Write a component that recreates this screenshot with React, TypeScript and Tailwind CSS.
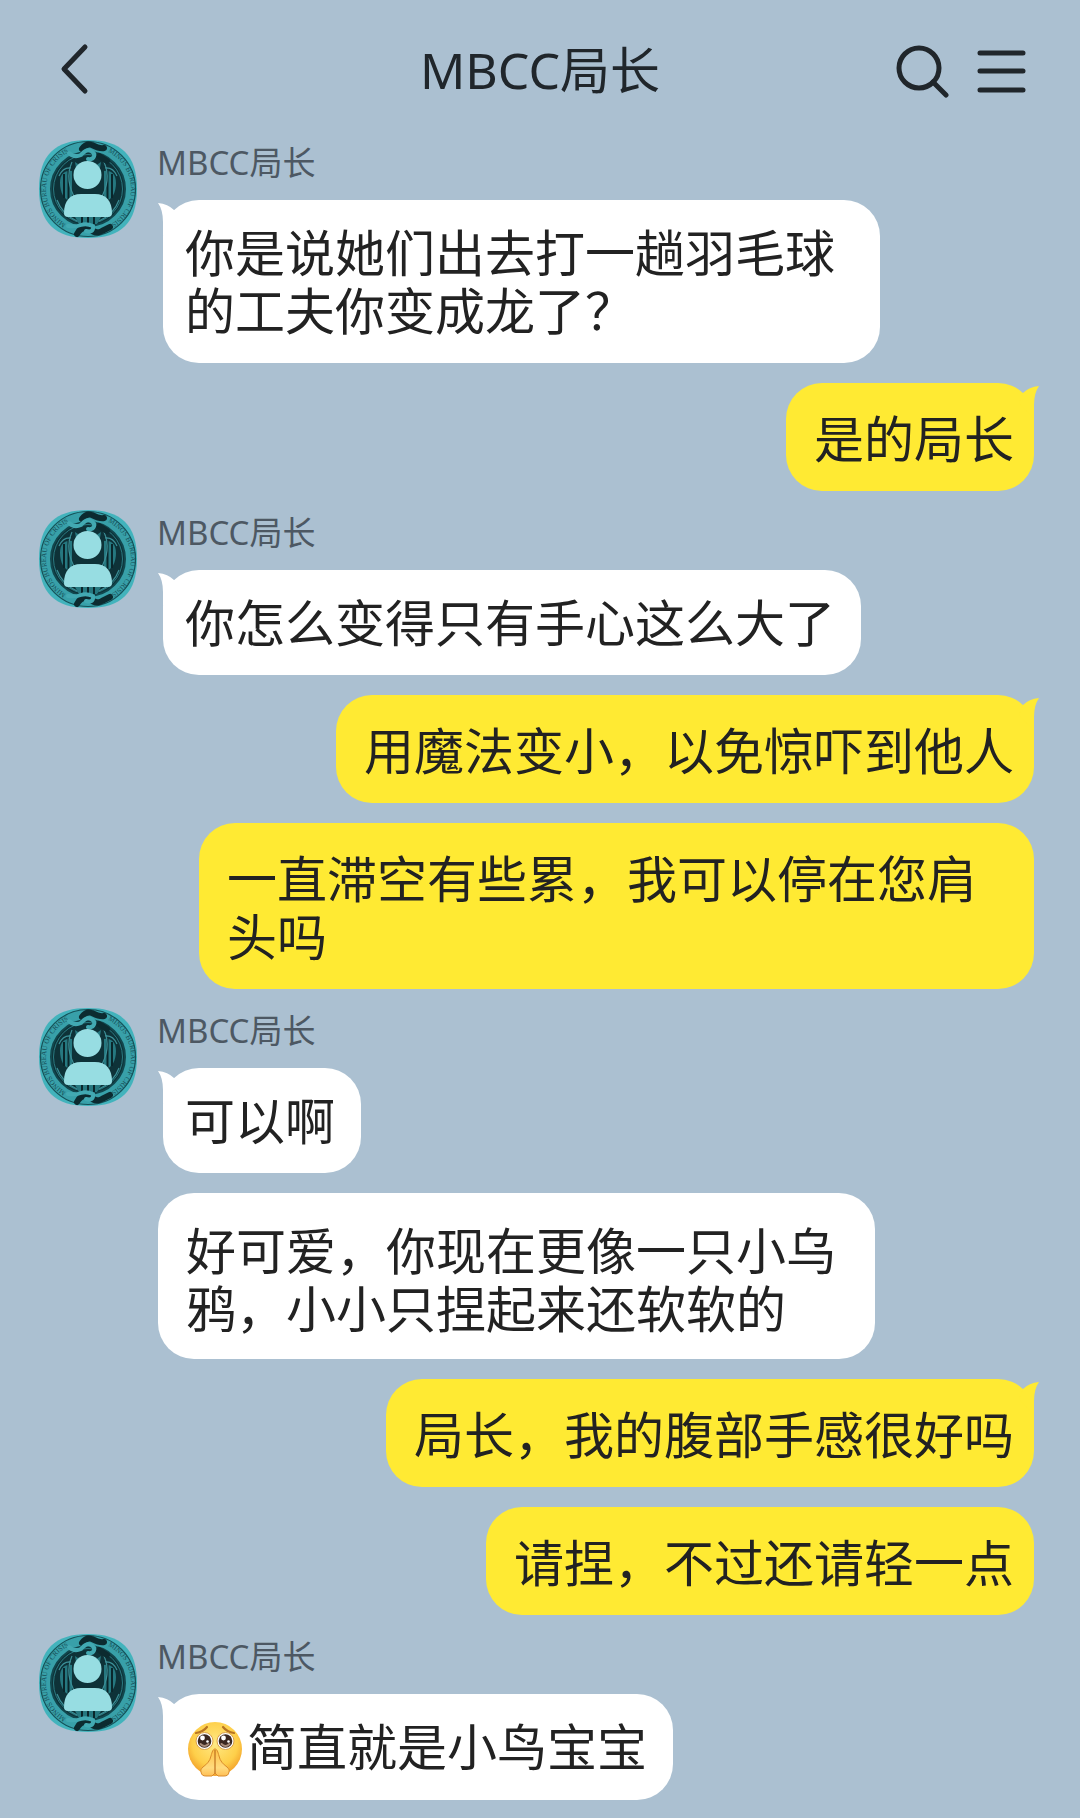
import { useId } from 'react'
import type { ReactNode } from 'react'

interface Message {
  id: number
  from: 'them' | 'me'
  /** First message of a run: gets the tail, and for 'them' the avatar and name. */
  first: boolean
  body: ReactNode
}

const CONTACT = 'MBCC局长'

const MESSAGES: Message[] = [
  { id: 1,  from: 'them', first: true,  body: '你是说她们出去打一趟羽毛球的工夫你变成龙了？' },
  { id: 2,  from: 'me',   first: true,  body: '是的局长' },
  { id: 3,  from: 'them', first: true,  body: '你怎么变得只有手心这么大了' },
  { id: 4,  from: 'me',   first: true,  body: '用魔法变小，以免惊吓到他人' },
  { id: 5,  from: 'me',   first: false, body: '一直滞空有些累，我可以停在您肩头吗' },
  { id: 6,  from: 'them', first: true,  body: '可以啊' },
  { id: 7,  from: 'them', first: false, body: '好可爱，你现在更像一只小乌鸦，小小只捏起来还软软的' },
  { id: 8,  from: 'me',   first: true,  body: '局长，我的腹部手感很好吗' },
  { id: 9,  from: 'me',   first: false, body: '请捏，不过还请轻一点' },
  { id: 10, from: 'them', first: true,  body: <><PleadingEmoji />简直就是小鸟宝宝</> },
]

function PleadingEmoji() {
  const id = useId()
  return (
    <svg viewBox="0 0 56 56" className="ml-0.5 mr-1 inline-block size-14 align-[-11px]" role="img" aria-label="拜托">
      <defs>
        <radialGradient id={`${id}f`} cx="50%" cy="40%" r="60%">
          <stop offset="0" stopColor="#ffe983" />
          <stop offset="0.7" stopColor="#fecf4a" />
          <stop offset="1" stopColor="#f2a02a" />
        </radialGradient>
        <linearGradient id={`${id}h`} x1="0" y1="0" x2="0" y2="1">
          <stop offset="0" stopColor="#ffc144" />
          <stop offset="0.7" stopColor="#ffdb7e" />
          <stop offset="1" stopColor="#ffbe55" />
        </linearGradient>
      </defs>
      <circle cx="28" cy="28" r="27" fill={`url(#${id}f)`} />
      <path d="M9 12q7-1 11-6M36 6q4 5 11 6" fill="none" stroke="#b87422" strokeWidth="2.200" strokeLinecap="round" />
      {[17.5, 38.5].map(cx => (
        <g key={cx}>
          <circle cx={cx} cy="20" r="8.500" fill="#fff" stroke="#d9a04a" />
          <circle cx={cx} cy="20" r="6.800" fill="#3a2720" />
          <path d={`M${cx - 4} 23q4 4 8 0`} fill="none" stroke="#a98c7a" strokeWidth="2" strokeLinecap="round" />
          <circle cx={cx - 2} cy="17" r="2.400" fill="#fff" />
          <circle cx={cx + 3} cy="20.500" r="1.300" fill="#fff" />
        </g>
      ))}
      <path
        d="M28 28c-2 0-3 3-4 7-1 5-4 8-8 11-2 2-2.500 3-2 5 .5 3 2 4 5 4h6l3-3 3 3h6c3 0 4.500-1 5-4 .5-2 0-3-2-5-4-3-7-6-8-11-1-4-2-7-4-7z"
        fill={`url(#${id}h)`}
        stroke="#d98a2a"
      />
      <path d="M28 29v23" stroke="#bd701f" strokeWidth="1.200" />
    </svg>
  )
}

function Avatar() {
  const id = useId()
  return (
    <svg viewBox="0 0 98 98" className="size-[98px] shrink-0" role="img" aria-label={CONTACT}>
      <defs>
        <clipPath id={`${id}c`}>
          <path d="M49 0C82 0 98 15 98 49S82 98 49 98 0 83 0 49 16 0 49 0z" />
        </clipPath>
        <path id={`${id}l`} d="M27 84A41 41 0 0 1 30 12" />
        <path id={`${id}r`} d="M69 12A41 41 0 0 1 72 84" />
      </defs>
      <g clipPath={`url(#${id}c)`}>
        <rect width="98" height="98" fill="#42b3bc" />
        <circle cx="49" cy="49" r="47.500" fill="#38a0a9" stroke="#155158" strokeWidth="1.200" />
        <circle cx="49" cy="49" r="37" fill="#0e3238" stroke="#12474e" strokeWidth="2" />
        <circle cx="49" cy="49" r="34.500" fill="none" stroke="#2b7b83" />
        <g fill="#17505a" fontSize="7" fontFamily="Liberation Serif, serif">
          <text><textPath href={`#${id}l`}>MINOS BUREAU OF CRISIS</textPath></text>
          <text><textPath href={`#${id}r`}>MINOS BUREAU OF CRISIS</textPath></text>
        </g>
        <g fill="#267880">
          <path d="M21 43c0-9 5-13 12-12v30c-8 0-12-9-12-18zM77 43c0-9-5-13-12-12v30c8 0 12-9 12-18z" />
          <path d="M36 22l6 4 2-4 5 4 5-4 2 4 6-4-3 18H39zM36 77h26l-4 7H40z" />
        </g>
        <g fill="none" stroke="#0a262b" strokeWidth="2">
          <path d="M25 34v24M29.500 31v30M68.500 31v30M73 34v24M43 77v8M49 77v9M55 77v8" />
        </g>
        <g fill="none" stroke="#3b8e96" strokeWidth="1.200">
          <path d="M18 60q5 14 20 21M80 60q-5 14-20 21M33 22q-8 18 4 38M65 22q8 18-4 38M20 36q4-9 12-8M78 36q-4-9-12-8" />
        </g>
        <g fill="none" stroke="#0c2b30" strokeWidth="6" strokeLinecap="round">
          <path d="M43 9q4-6 10-4 8 4 12 3M60 16l8 5" />
          <path d="M38 94q4-8 12-6 6 7 13 3l8-4" />
        </g>
        <g fill="none" stroke="#42a9b2" strokeWidth="4" strokeLinecap="round">
          <path d="M30 13q5 5 12 2c3-3 5-6 10-4 6 3 3 9-3 8" />
          <path d="M29 86q8 1 13-1t12 1q1 7-7 5" />
        </g>
        <circle cx="48.500" cy="35" r="14" fill="#97dde2" />
        <path d="M25 73c0-12 6-19 17-19h14c11 0 17 7 17 19q0 4-4 4H29q-4 0-4-4z" fill="#97dde2" />
      </g>
    </svg>
  )
}

/** Small horn on the outer top corner of a bubble. */
function Tail({ side }: { side: 'left' | 'right' }) {
  return (
    <svg
      viewBox="0 0 24 36"
      className={`absolute top-0 h-9 w-6 fill-current ${side === 'left' ? '-left-[5px] -scale-x-100' : '-right-[5px]'}`}
      aria-hidden="true"
    >
      <path d="M8 10Q14 4 24 3Q19 10 19 22V36L4 20Z" />
    </svg>
  )
}

function Bubble({ from, first, children }: { from: Message['from']; first: boolean; children: ReactNode }) {
  const mine = from === 'me'
  const color = mine ? 'text-[#ffea33]' : 'text-white'
  const fill = mine ? 'bg-[#ffea33]' : 'bg-white'
  const space = mine
    ? 'max-w-[835px] pt-[27px] pb-[23px] pl-7 pr-5'
    : first
      ? 'ml-[6px] max-w-[717px] pt-6 pb-[23px] pl-[22px] pr-[26px]'
      : 'max-w-[717px] pt-[29px] pb-[21px] pl-7 pr-5'

  return (
    <div className={`relative w-fit rounded-[36px] ${fill} ${color} ${space}`}>
      {first && <Tail side={mine ? 'right' : 'left'} />}
      <p className="relative text-[50px] leading-[58px] text-[#222]">{children}</p>
    </div>
  )
}

function MessageRow({ message }: { message: Message }) {
  const { from, first, body } = message

  if (from === 'me') {
    return (
      <li className="mt-5 flex justify-end pr-[46px] first:mt-0">
        <Bubble from={from} first={first}>{body}</Bubble>
      </li>
    )
  }

  if (!first) {
    return (
      <li className="mt-5 pl-[158px]">
        <Bubble from={from} first={first}>{body}</Bubble>
      </li>
    )
  }

  return (
    <li className="mt-[19px] flex gap-5 pl-[39px] first:mt-0">
      <Avatar />
      <div className="min-w-0">
        <p className="h-[60px] text-[33px] leading-[46px] text-[#4d5863]">{CONTACT}</p>
        <Bubble from={from} first={first}>{body}</Bubble>
      </div>
    </li>
  )
}

function Header() {
  return (
    <header className="flex h-[140px] items-center justify-between px-[50px] text-[#20262b]">
      <div className="w-[140px]">
        <button type="button" className="block px-2 py-4" aria-label="返回">
          <svg viewBox="0 0 32 54" className="h-[54px] w-8" fill="none" stroke="currentColor" strokeWidth="5" strokeLinecap="round" strokeLinejoin="round">
            <path d="M27 4L6 26l21 22" />
          </svg>
        </button>
      </div>
      <h1 className="text-center text-[50px] leading-[68px]">{CONTACT}</h1>
      <div className="flex w-[140px] items-center justify-between">
        <button type="button" aria-label="搜索">
          <svg viewBox="0 0 60 56" className="h-14 w-[60px]" fill="none" stroke="currentColor" strokeWidth="5" strokeLinecap="round">
            <circle cx="29" cy="26" r="20" />
            <path d="M43 40l13 13" />
          </svg>
        </button>
        <button type="button" aria-label="菜单">
          <svg viewBox="0 0 56 56" className="size-14" fill="none" stroke="currentColor" strokeWidth="5" strokeLinecap="round">
            <path d="M6 11h43M6 29h43M6 48h43" />
          </svg>
        </button>
      </div>
    </header>
  )
}

export default function App() {
  return (
    <div className="min-h-screen bg-[#abc0d1] font-['Noto_Sans','Noto_Sans_CJK_SC',sans-serif]" lang="zh-CN">
      <Header />
      <main>
        <ol className="pb-[19px]">
          {MESSAGES.map(m => <MessageRow key={m.id} message={m} />)}
        </ol>
      </main>
    </div>
  )
}
